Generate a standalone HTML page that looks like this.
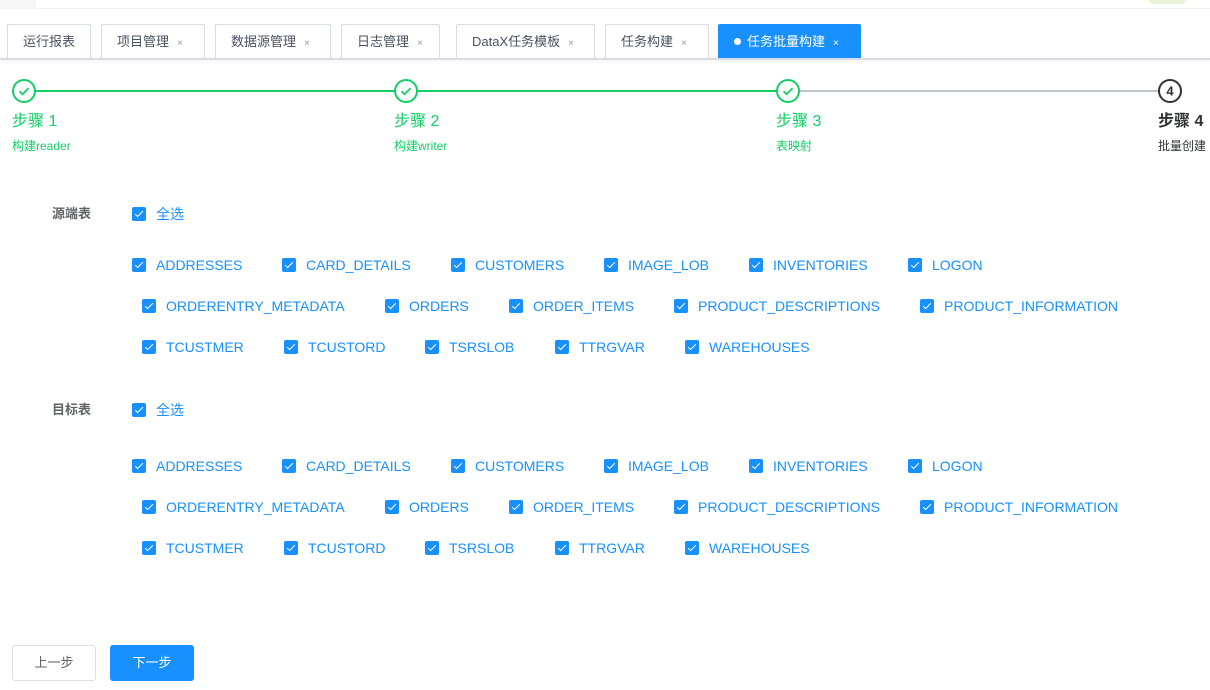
<!DOCTYPE html>
<html><head><meta charset="utf-8"><style>
*{margin:0;padding:0;box-sizing:border-box}
body{width:1210px;height:690px;position:relative;background:#fff;font-family:"Liberation Sans","Noto Sans CJK SC",sans-serif;overflow:hidden}
.a{position:absolute}
.top{left:0;top:0;width:1210px;height:9px;background:#fff;border-bottom:1px solid #f0f0f0}
.topl{left:0;top:0;width:36px;height:9px;background:#f7f7f7}
.av{left:1148px;top:-6px;width:38px;height:10px;border-radius:6px;background:#eaf3d6}
.tabbar{left:0;top:58px;width:1210px;height:2px;background:#d8dce5;box-shadow:0 1px 3px rgba(0,0,0,.08)}
.tab{top:24px;height:34px;border:1px solid #d8dce5;border-bottom:none;font-size:13px;color:#495060;line-height:34px;padding-left:10px;background:#fff;border-radius:2px 2px 0 0}
.tab i{font-style:normal;font-size:10px;color:#999;margin-left:8px}
.tab.on{background:#1890ff;border-color:#1890ff;color:#fff}
.tab.on i{color:#fff}
.line{height:2px;top:90px}
.st{top:112px;font-size:16px;color:#13ce66;line-height:20px}
.sd{top:139px;font-size:12px;color:#13ce66;line-height:14px}
.cb{width:14px;height:14px;background:#1890ff;border-radius:2px}
.cb:after{content:"";position:absolute;left:4.5px;top:1.5px;width:3px;height:7px;border:solid #fff;border-width:0 1.5px 1.5px 0;transform:rotate(45deg)}
.lb{font-size:14px;color:#1890ff;line-height:16px}
.lab{font-size:13px;color:#606266;font-weight:bold;line-height:16px}
.btn{top:645px;width:84px;height:36px;border-radius:3px;font-size:13px;text-align:center;line-height:34px}
</style></head><body>
<div class="a top"></div><div class="a topl"></div><div class="a av"></div>
<div class="a tabbar"></div>
<div class="a tab" style="left:7px;width:84px;padding-left:15px">运行报表</div>
<div class="a tab" style="left:101px;width:104px;padding-left:15px">项目管理<i>×</i></div>
<div class="a tab" style="left:215px;width:116px;padding-left:15px">数据源管理<i>×</i></div>
<div class="a tab" style="left:341px;width:99px;padding-left:15px">日志管理<i>×</i></div>
<div class="a tab" style="left:456px;width:139px;padding-left:15px">DataX任务模板<i>×</i></div>
<div class="a tab" style="left:605px;width:104px;padding-left:15px">任务构建<i>×</i></div>
<div class="a tab on" style="left:718px;width:143px;padding-left:15px"><span style="display:inline-block;width:7px;height:7px;border-radius:50%;background:#fff;margin-right:6px;vertical-align:1px"></span>任务批量构建<i>×</i></div>

<div class="a line" style="left:36px;width:358px;background:#13ce66"></div>
<div class="a line" style="left:418px;width:358px;background:#13ce66"></div>
<div class="a line" style="left:800px;width:358px;background:#c0c4cc"></div>
<svg class="a" style="left:12px;top:79px" width="24" height="24"><circle cx="12" cy="12" r="11" fill="#fff" stroke="#13ce66" stroke-width="2"/><path d="M7.5 12.2l3 3 6-6" fill="none" stroke="#13ce66" stroke-width="1.8"/></svg>
<svg class="a" style="left:394px;top:79px" width="24" height="24"><circle cx="12" cy="12" r="11" fill="#fff" stroke="#13ce66" stroke-width="2"/><path d="M7.5 12.2l3 3 6-6" fill="none" stroke="#13ce66" stroke-width="1.8"/></svg>
<svg class="a" style="left:776px;top:79px" width="24" height="24"><circle cx="12" cy="12" r="11" fill="#fff" stroke="#13ce66" stroke-width="2"/><path d="M7.5 12.2l3 3 6-6" fill="none" stroke="#13ce66" stroke-width="1.8"/></svg>
<svg class="a" style="left:1158px;top:79px" width="24" height="24"><circle cx="12" cy="12" r="11" fill="#fff" stroke="#303133" stroke-width="2"/><text x="12" y="16.5" text-anchor="middle" font-size="13" font-weight="bold" fill="#303133" font-family="Liberation Sans">4</text></svg>
<div class="a st" style="left:12px">步骤 1</div><div class="a sd" style="left:12px">构建reader</div>
<div class="a st" style="left:394px">步骤 2</div><div class="a sd" style="left:394px">构建writer</div>
<div class="a st" style="left:776px">步骤 3</div><div class="a sd" style="left:776px">表映射</div>
<div class="a st" style="left:1158px;color:#303133;font-weight:bold">步骤 4</div><div class="a sd" style="left:1158px;color:#303133">批量创建</div>

<div id="g"></div>
<div class="a btn" style="left:12px;border:1px solid #dcdfe6;color:#606266">上一步</div>
<div class="a btn" style="left:110px;background:#1890ff;color:#fff;line-height:36px">下一步</div>
<script>
var h='';
function cb(x,y,t){h+='<div class="a cb" style="left:'+x+'px;top:'+(y-7)+'px"></div><div class="a lb" style="left:'+(x+24)+'px;top:'+(y-8)+'px">'+t+'</div>';}
function block(y0,lab,d){
h+='<div class="a lab" style="left:52px;top:'+(y0-8)+'px">'+lab+'</div>';
cb(132,y0,'全选');
var r1=[[132,'ADDRESSES'],[282,'CARD_DETAILS'],[451,'CUSTOMERS'],[604,'IMAGE_LOB'],[749,'INVENTORIES'],[908,'LOGON']];
var r2=[[142,'ORDERENTRY_METADATA'],[385,'ORDERS'],[509,'ORDER_ITEMS'],[674,'PRODUCT_DESCRIPTIONS'],[920,'PRODUCT_INFORMATION']];
var r3=[[142,'TCUSTMER'],[284,'TCUSTORD'],[425,'TSRSLOB'],[555,'TTRGVAR'],[685,'WAREHOUSES']];
r1.forEach(function(e){cb(e[0],y0+d,e[1])});
r2.forEach(function(e){cb(e[0],y0+d+41,e[1])});
r3.forEach(function(e){cb(e[0],y0+d+82,e[1])});
}
block(214,'源端表',51);block(410,'目标表',56);
document.getElementById('g').innerHTML=h;
</script>
</body></html>
